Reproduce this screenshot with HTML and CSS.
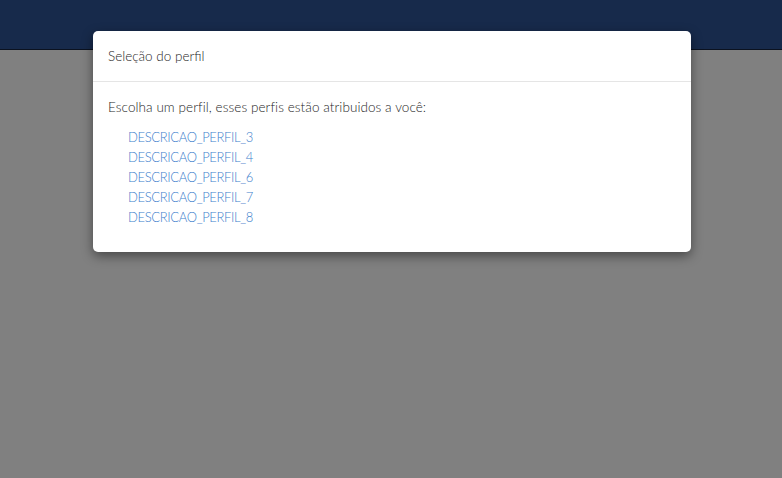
FILE: index.html
```html
<!DOCTYPE html>
<html lang="pt">
<head>
<meta charset="utf-8">
<title>Seleção do perfil</title>
<link rel="stylesheet" href="styles.css">
</head>
<body>
<header class="topbar"></header>
<div class="backdrop">
  <div class="modal">
    <div class="modal-header">Seleção do perfil</div>
    <div class="modal-body">
      <p class="intro">Escolha um perfil, esses perfis estão atribuidos a você:</p>
      <ul class="profiles">
        <li><a href="#">DESCRICAO_PERFIL_3</a></li>
        <li><a href="#">DESCRICAO_PERFIL_4</a></li>
        <li><a href="#">DESCRICAO_PERFIL_6</a></li>
        <li><a href="#">DESCRICAO_PERFIL_7</a></li>
        <li><a href="#">DESCRICAO_PERFIL_8</a></li>
      </ul>
    </div>
  </div>
</div>
</body>
</html>
```
FILE: styles.css
```css
html, body {
  margin: 0;
  height: 100%;
}
body {
  background: #808080;
  font-family: Lato, "Open Sans", sans-serif;
  font-size: 13.5px;
  font-weight: 300;
  color: #1e1e1e;
  position: relative;
}
.topbar {
  height: 50px;
  background: #172a4b;
  border-bottom: 1px solid #0b1220;
  box-sizing: border-box;
}
.backdrop {
  position: absolute;
  inset: 0;
  display: flex;
  justify-content: center;
  align-items: flex-start;
  padding: 31px 0 0 2px;
}
.modal {
  width: 598px;
  background: #fff;
  border-radius: 5px;
  box-shadow: 0 4px 12px rgba(0,0,0,0.45);
}
.modal-header {
  padding: 15px;
  line-height: 20px;
  border-bottom: 1px solid #e5e5e5;
}
.modal-body {
  padding: 15px;
}
.intro {
  margin: 0;
  line-height: 20px;
  letter-spacing: 0.07px;
}
.profiles {
  list-style: none;
  margin: 10px 0 10px;
  padding-left: 20px;
}
.profiles li {
  line-height: 20px;
}
.profiles a {
  color: #3d80cc;
  font-size: 13px;
  letter-spacing: -0.35px;
  text-decoration: none;
}
```
